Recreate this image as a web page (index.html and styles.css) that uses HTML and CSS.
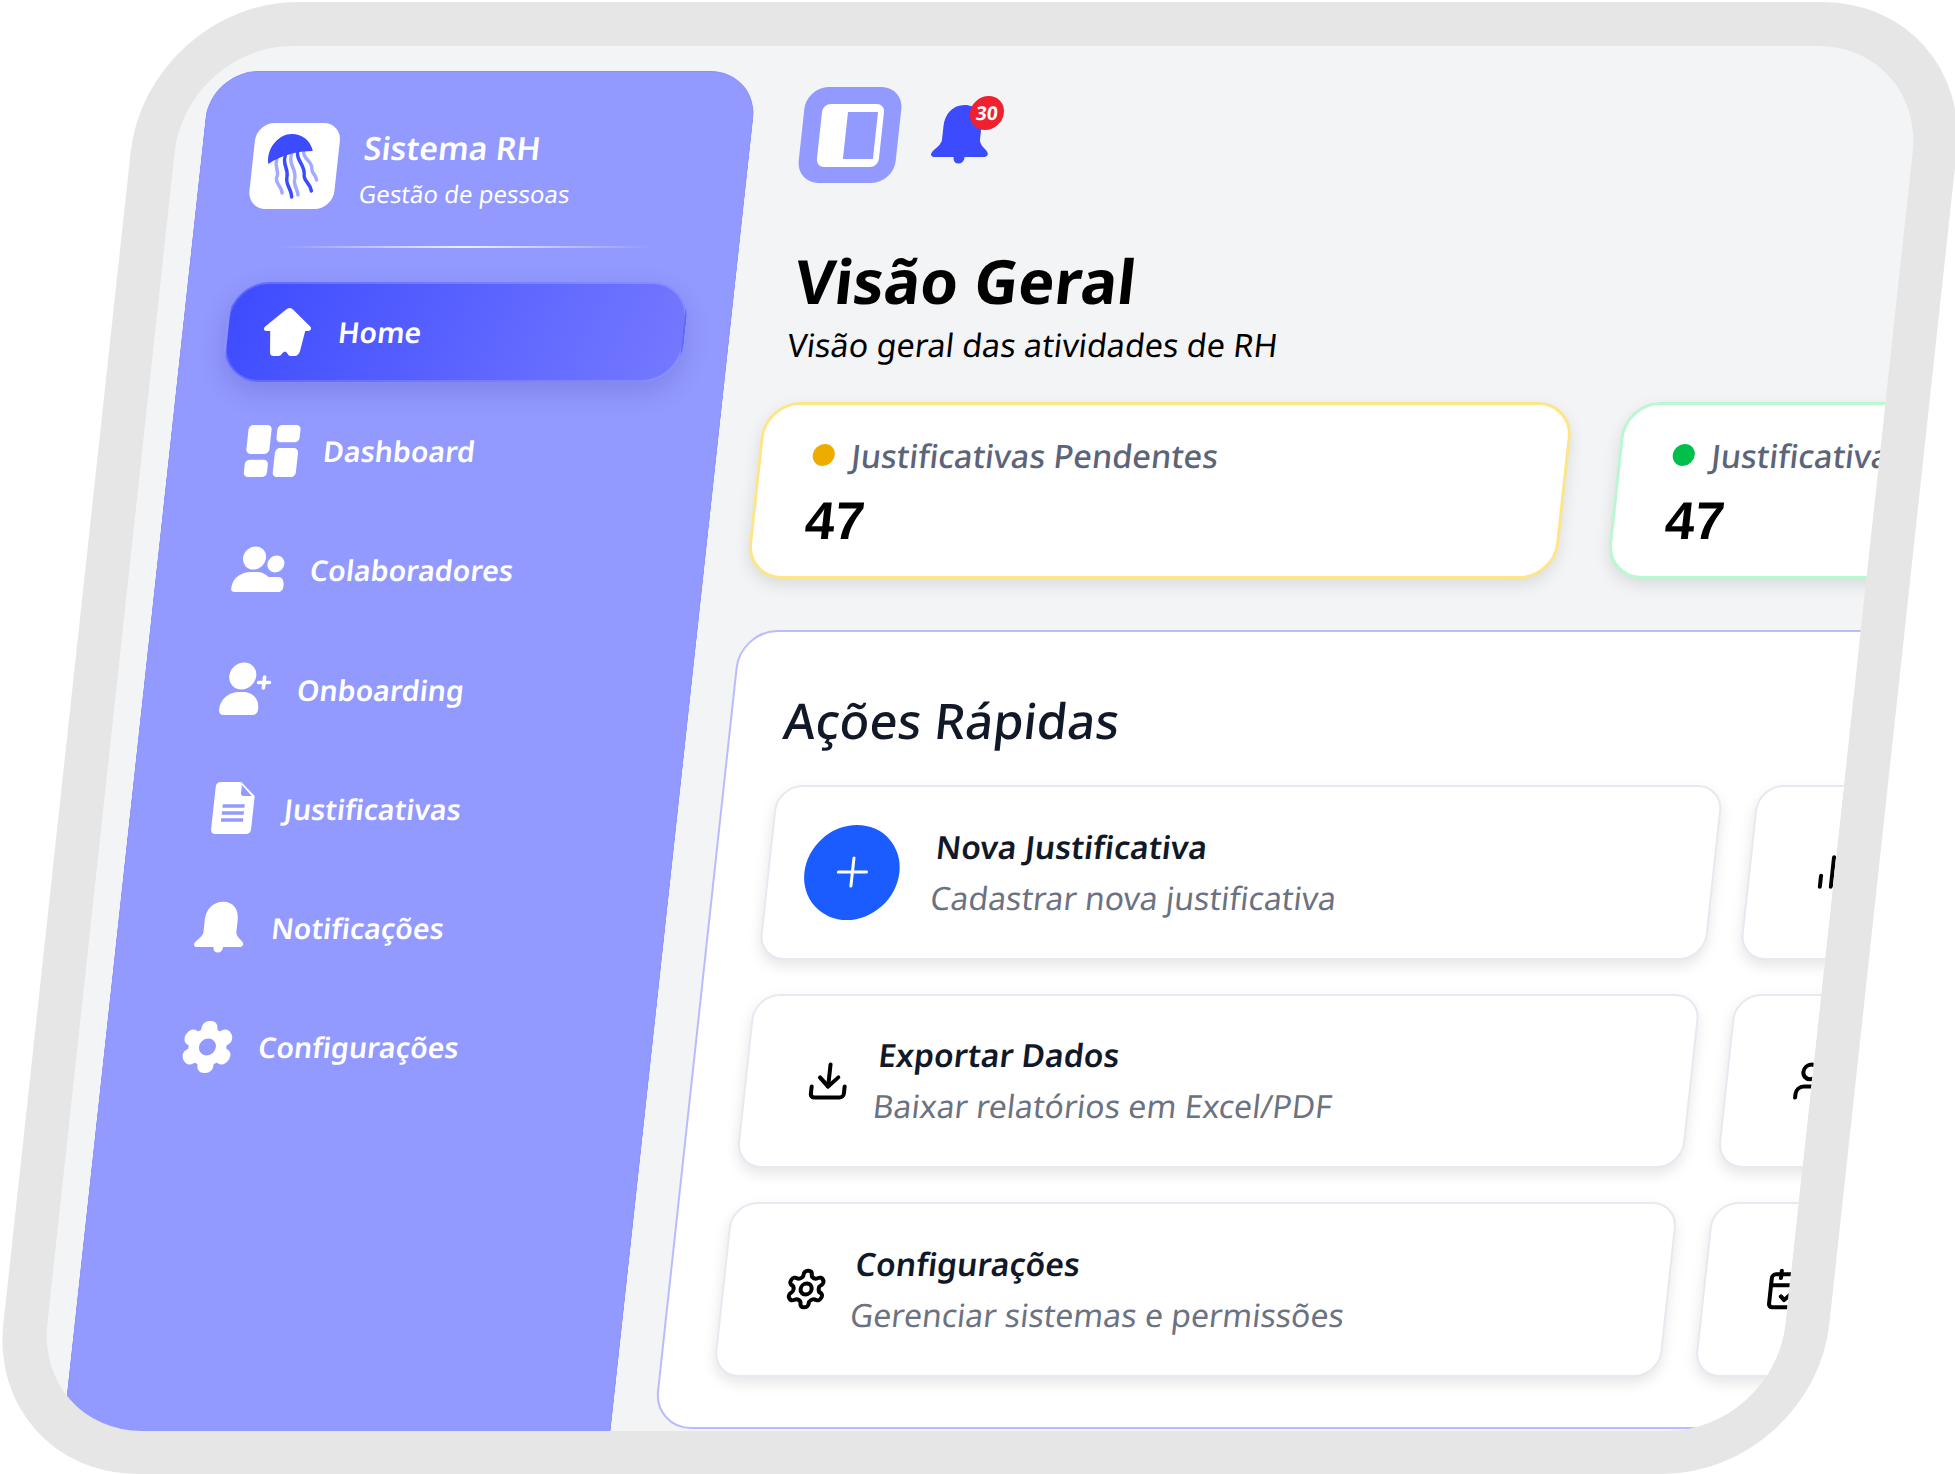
FILE: index.html
```html
<!DOCTYPE html>
<html lang="pt-BR">
<head>
<meta charset="utf-8">
<title>Sistema RH</title>
<link rel="stylesheet" href="styles.css">
</head>
<body>
<div class="frame">
  <aside class="sidebar">
    <div class="brand">
      <div class="brand-logo">
        <svg viewBox="0 0 85 86" class="jelly">
          <g fill="none" stroke-linecap="round" stroke-width="3.4">
            <path class="t-light" d="M24 36C22 44 28 48 26 54C24 60 31 62 33 70"/>
            <path class="t-dark" d="M32 33C30 42 37 46 36 54C35 62 42 66 43 74"/>
            <path class="t-light" d="M38 32C36 42 45 46 44 56C43 62 48 66 49 72"/>
            <path class="t-dark" d="M44 30C44 38 53 42 53 52C53 58 60 60 62 68"/>
            <path class="t-light" d="M50 29C50 36 60 38 60 46C60 50 65 52 66 57"/>
          </g>
          <path class="dome" d="M16 41C12 24 24 11 36 11C47 11 56 18 59 28C44 28 28 32 16 41Z"/>
        </svg>
      </div>
      <div class="brand-text">
        <div class="brand-name">Sistema RH</div>
        <div class="brand-sub">Gestão de pessoas</div>
      </div>
    </div>
    <div class="divider"></div>
    <nav class="nav">
      <a class="nav-item active">
        <svg class="nav-icon" viewBox="0 0 52 52"><path d="M26 2Q28 2 30 4L49 21Q51 25 46 25H44L41 45Q40 50 36 50H32Q30 50 29 48Q26 43 23 48Q22 50 20 50H15Q11 50 11 45L9 25H6Q1 25 3 21L22 4Q24 2 26 2Z"/></svg>
        <span>Home</span>
      </a>
      <a class="nav-item">
        <svg class="nav-icon" viewBox="3 3 18 18"><rect x="3" y="3" width="8" height="10" rx="1.6"/><rect x="13" y="3" width="8" height="6" rx="1.6"/><rect x="13" y="11" width="8" height="10" rx="1.6"/><rect x="3" y="15" width="8" height="6" rx="1.6"/></svg>
        <span>Dashboard</span>
      </a>
      <a class="nav-item">
        <svg class="nav-icon" viewBox="0 0 52 52"><circle cx="20" cy="14" r="11.5"/><circle cx="42" cy="20" r="8.5"/><path d="M0 44C0 34 8 28 18 28H24C29 28 33 30 36 33H46C50 33 52 37 52 42C52 46 50 48 47 48H4C1 48 0 47 0 44Z"/></svg>
        <span>Colaboradores</span>
      </a>
      <a class="nav-item">
        <svg class="nav-icon" viewBox="0 0 52 52"><circle cx="21" cy="13" r="13.5"/><path d="M1 46C1 36 9 29 19 29H23C33 29 40 36 40 46C40 50 38 52 35 52H6C3 52 1 50 1 46Z"/><path class="plus" d="M43 14V25M37.5 19.5H48.5"/></svg>
        <span>Onboarding</span>
      </a>
      <a class="nav-item">
        <svg class="nav-icon" viewBox="0 0 52 52"><path d="M11 0H31L46 14V47Q46 52 41 52H11Q6 52 6 47V5Q6 0 11 0Z"/><path class="cut" d="M32 3L43 14H35Q32 14 32 11Z"/><path class="cut-line" d="M15 24H37M15 31H37M15 38H37"/></svg>
        <span>Justificativas</span>
      </a>
      <a class="nav-item">
        <svg class="nav-icon" viewBox="0 0 60 60"><path d="M30 1C18 1 11 10 11 22V36Q11 40 4 46Q-1 51 4 53H56Q61 51 56 46Q49 40 49 36V22C49 10 42 1 30 1Z"/><circle cx="30" cy="54" r="5.5"/></svg>
        <span>Notificações</span>
      </a>
      <a class="nav-item">
        <svg class="nav-icon" viewBox="0 0 52 52"><circle cx="26" cy="26" r="19"/><g><rect x="18" y="0" width="16" height="52" rx="7"/><rect x="18" y="0" width="16" height="52" rx="7" transform="rotate(60 26 26)"/><rect x="18" y="0" width="16" height="52" rx="7" transform="rotate(120 26 26)"/></g><circle class="hole" cx="26" cy="26" r="8.5"/></svg>
        <span>Configurações</span>
      </a>
    </nav>
  </aside>

  <main class="main">
    <header class="topbar">
      <button class="toggle" type="button"><span class="toggle-panel"></span></button>
      <div class="bell">
        <svg class="bell-icon" viewBox="0 0 60 60"><path d="M30 1C18 1 11 10 11 22V36Q11 40 4 46Q-1 51 4 53H56Q61 51 56 46Q49 40 49 36V22C49 10 42 1 30 1Z"/><circle cx="30" cy="54" r="5.5"/></svg>
        <span class="badge">30</span>
      </div>
    </header>

    <h1 class="title">Visão Geral</h1>
    <p class="subtitle">Visão geral das atividades de RH</p>

    <section class="stats">
      <div class="stat stat-yellow">
        <div class="stat-label"><i class="dot dot-yellow"></i>Justificativas Pendentes</div>
        <div class="stat-value">47</div>
      </div>
      <div class="stat stat-green">
        <div class="stat-label"><i class="dot dot-green"></i>Justificativas Aprovadas</div>
        <div class="stat-value">47</div>
      </div>
    </section>

    <section class="panel">
      <h2 class="panel-title">Ações Rápidas</h2>
      <div class="actions">
        <div class="action">
          <div class="circle">
            <svg class="line-icon white" viewBox="0 0 24 24"><path d="M12 5.5V18.5M5.5 12H18.5"/></svg>
          </div>
          <div class="action-text text-wide">
            <div class="action-title">Nova Justificativa</div>
            <div class="action-desc">Cadastrar nova justificativa</div>
          </div>
        </div>
        <div class="action">
          <div class="plain-icon">
            <svg class="line-icon" viewBox="0 0 24 24"><path d="M18 20V10M12 20V4M6 20V14"/></svg>
          </div>
        </div>
        <div class="action">
          <div class="plain-icon">
            <svg class="line-icon" viewBox="0 0 24 24"><path d="M21 15V19A2 2 0 0 1 19 21H5A2 2 0 0 1 3 19V15"/><path d="M7 10L12 15L17 10"/><path d="M12 15V3"/></svg>
          </div>
          <div class="action-text">
            <div class="action-title">Exportar Dados</div>
            <div class="action-desc">Baixar relatórios em Excel/PDF</div>
          </div>
        </div>
        <div class="action">
          <div class="plain-icon">
            <svg class="line-icon" viewBox="0 0 24 24"><path d="M19 21V19A4 4 0 0 0 15 15H9A4 4 0 0 0 5 19V21"/><circle cx="12" cy="7" r="4"/></svg>
          </div>
        </div>
        <div class="action">
          <div class="plain-icon">
            <svg class="line-icon" viewBox="0 0 24 24"><path d="M12.22 2h-.44a2 2 0 0 0-2 2v.18a2 2 0 0 1-1 1.73l-.43.25a2 2 0 0 1-2 0l-.15-.08a2 2 0 0 0-2.73.73l-.22.38a2 2 0 0 0 .73 2.73l.15.1a2 2 0 0 1 1 1.72v.51a2 2 0 0 1-1 1.74l-.15.09a2 2 0 0 0-.73 2.73l.22.38a2 2 0 0 0 2.73.73l.15-.08a2 2 0 0 1 2 0l.43.25a2 2 0 0 1 1 1.73V20a2 2 0 0 0 2 2h.44a2 2 0 0 0 2-2v-.18a2 2 0 0 1 1-1.73l.43-.25a2 2 0 0 1 2 0l.15.08a2 2 0 0 0 2.73-.73l.22-.39a2 2 0 0 0-.73-2.73l-.15-.08a2 2 0 0 1-1-1.74v-.5a2 2 0 0 1 1-1.74l.15-.09a2 2 0 0 0 .73-2.73l-.22-.38a2 2 0 0 0-2.73-.73l-.15.08a2 2 0 0 1-2 0l-.43-.25a2 2 0 0 1-1-1.73V4a2 2 0 0 0-2-2z"/><circle cx="12" cy="12" r="3"/></svg>
          </div>
          <div class="action-text">
            <div class="action-title">Configurações</div>
            <div class="action-desc">Gerenciar sistemas e permissões</div>
          </div>
        </div>
        <div class="action">
          <div class="plain-icon">
            <svg class="line-icon" viewBox="0 0 24 24"><path d="M8 2V6M16 2V6"/><rect x="3" y="4" width="18" height="18" rx="2"/><path d="M3 10H21"/><path d="M9 16L11 18L15 14"/></svg>
          </div>
        </div>
      </div>
    </section>
  </main>
</div>
</body>
</html>
```
FILE: styles.css
```css
* { box-sizing: border-box; }
html, body { margin: 0; padding: 0; width: 1955px; height: 1474px; overflow: hidden; background: #fff; }
body { font-family: "Noto Sans", "Open Sans", sans-serif; color: #000; }

.frame {
  width: 1826px;
  height: 1472px;
  margin: 2px 0 0 67px;
  display: flex;
  padding: 25px 0 0 27px;
  background: #f3f4f6;
  border: solid #e6e6e6;
  border-width: 44px 44px 43px;
  border-radius: 150px;
  overflow: hidden;
  transform: skewX(-6.2deg);
  transform-origin: center;
}

/* sidebar */
.sidebar {
  flex: none;
  width: 548px;
  background: #9299ff;
  border: 1px solid #8a90fb;
  border-bottom: 0;
  border-radius: 48px 48px 0 0;
  padding: 51px 0 0 43px;
}
.brand { display: flex; align-items: flex-start; padding-left: 8px; }
.brand-logo { width: 85px; height: 86px; background: #fff; border-radius: 18px; flex: none; }
.jelly { display: block; width: 85px; height: 86px; }
.dome { fill: #3d4bff; }
.t-dark { stroke: #3d4bff; }
.t-light { stroke: #a4aaff; }
.brand-text { margin-left: 25px; color: #fff; }
.brand-name { font-size: 32px; font-weight: 600; line-height: 44px; margin-top: 3px; }
.brand-sub { font-size: 24px; line-height: 34px; margin-top: 7px; }
.divider {
  width: 378px; height: 2px; margin: 35px 0 33.5px 41px;
  background: linear-gradient(90deg, rgba(255,255,255,0), rgba(255,255,255,.85) 50%, rgba(255,255,255,0));
}
.nav { display: flex; flex-direction: column; gap: 19.2px; }
.nav-item {
  width: 459px; height: 100px; display: flex; align-items: center; padding-left: 33px;
  color: #fff; font-size: 28.6px; font-weight: 600; border-radius: 38px;
}
.nav-item span { margin-left: 25px; }
.nav-item.active {
  background: linear-gradient(110deg, #3d4bff, #7579ff);
  box-shadow: 0 10px 25px rgba(40,40,120,.18);
  border: 2px solid rgba(255,255,255,.16);
}
.nav-icon { width: 52px; height: 52px; flex: none; fill: #fff; overflow: visible; }
.plus { fill: none; stroke: #fff; stroke-width: 3.6; stroke-linecap: round; }
.cut { fill: #9299ff; }
.cut-line { fill: none; stroke: #9299ff; stroke-width: 3.4; }
.hole { fill: #9299ff; }

/* main */
.main { flex: none; width: 1200px; margin-left: 42px; }
.topbar { display: flex; align-items: flex-start; padding: 16px 0 0 8px; }
.toggle {
  width: 97px; height: 96px; padding: 0; border: 0; background: #9299ff; border-radius: 22px;
  display: flex; align-items: center; justify-content: center;
}
.toggle-panel {
  display: block; width: 62px; height: 63px; background: #fff; border-radius: 8px;
  position: relative;
}
.toggle-panel::after {
  content: ""; position: absolute; left: 26px; top: 8px; width: 30px; height: 47px; background: #9299ff;
}
.bell { position: relative; width: 62px; height: 60px; margin: 17px 0 0 32px; }
.bell-icon { display: block; width: 62px; height: 60px; fill: #3d4bff; overflow: visible; }
.badge {
  position: absolute; left: 37px; top: -8px; width: 34px; height: 34px; border-radius: 50%;
  background: #f02030; color: #fff; font-size: 19px; font-weight: 700; line-height: 34px; text-align: center;
}
.title { margin: 59px 0 0 18px; font-size: 61px; line-height: 78px; font-weight: 700; color: #000; white-space: nowrap; }
.subtitle { margin: 2px 0 0 17px; font-size: 32.3px; line-height: 44px; color: #000; white-space: nowrap; }

.stats { display: flex; gap: 50px; margin-top: 36px; width: 1700px; }
.stat {
  flex: none; width: 810px; height: 177px; background: #fff; border: 3px solid; border-radius: 36px;
  padding: 28px 0 0 51px; box-shadow: 0 6px 16px rgba(0,0,0,.1);
}
.stat-yellow { border-color: #fde68a; }
.stat-green { border-color: #bbf7d0; }
.stat-label { display: flex; align-items: center; font-size: 32.4px; font-weight: 500; line-height: 44px; color: #5b6478; white-space: nowrap; }
.dot { width: 22px; height: 22px; border-radius: 50%; margin-right: 17px; flex: none; }
.dot-yellow { background: #eeab00; }
.dot-green { background: #00c04b; }
.stat-value { font-family: "Liberation Sans", Arial, sans-serif; font-size: 53px; line-height: 60px; font-weight: 700; margin-top: 14px; color: #000; }

.panel {
  width: 2028px; height: 799px; margin-top: 51px; background: #fff;
  border: 2px solid #b8bcff; border-radius: 38px; padding: 0 0 0 52px;
}
.panel-title { margin: 58px 0 0; font-size: 49px; line-height: 60px; font-weight: 500; color: #111827; }
.actions { display: grid; grid-template-columns: 947px 947px; grid-auto-rows: 174.5px; gap: 34px; margin-top: 35px; }
.action {
  display: flex; align-items: center; padding-left: 35px; background: #fff;
  border: 2px solid #e8e9f0; border-radius: 26px; box-shadow: 0 6px 14px rgba(0,0,0,.1); overflow: hidden;
}
.circle { flex: none; width: 95px; height: 95px; border-radius: 50%; background: #1a5cff; display: flex; align-items: center; justify-content: center; }
.plain-icon { flex: none; width: 94px; height: 44px; display: flex; justify-content: center; }
.line-icon { width: 44px; height: 44px; fill: none; stroke: #000; stroke-width: 2.2; stroke-linecap: round; stroke-linejoin: round; }
.line-icon.white { stroke: #fff; width: 52px; height: 52px; stroke-width: 1.4; }
.action-text { margin-left: 0; white-space: nowrap; }
.text-wide { margin-left: 34px; }
.action-title { font-size: 32px; line-height: 40px; font-weight: 600; color: #111827; }
.action-desc { font-size: 32px; line-height: 40px; margin-top: 11px; color: #6b7280; }
```
